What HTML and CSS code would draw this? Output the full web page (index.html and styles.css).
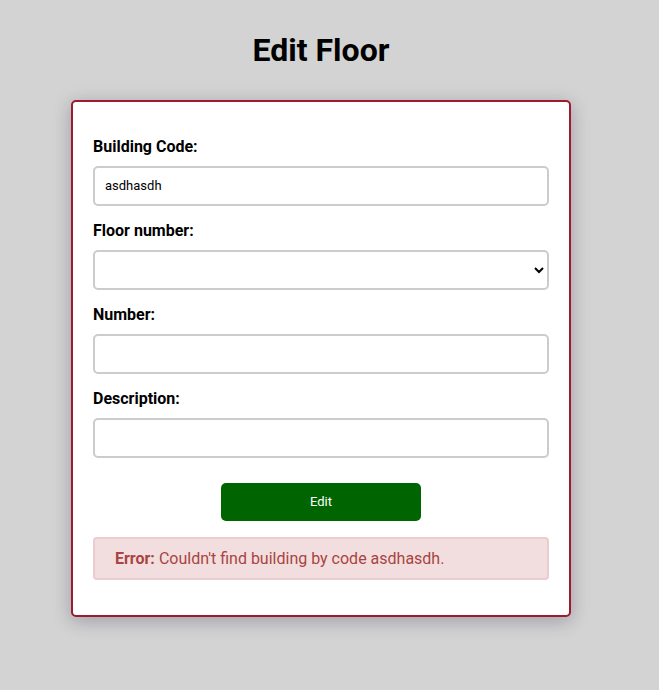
FILE: index.html
```html
<!DOCTYPE html>
<html>
<head>
<meta charset="utf-8">
<link rel="stylesheet" href="styles.css">
</head>
<body>
<div class="page">
  <h1 class="title">Edit Floor</h1>
  <div class="card">
    <form class="form">
      <label class="label">Building Code:</label>
      <input class="field" type="text" value="asdhasdh">
      <label class="label">Floor number:</label>
      <select class="field select"><option></option></select>
      <label class="label">Number:</label>
      <input class="field" type="text">
      <label class="label">Description:</label>
      <input class="field" type="text">
      <div class="actions"><button class="btn" type="button">Edit</button></div>
    </form>
    <div class="error"><strong>Error:</strong> Couldn't find building by code asdhasdh.</div>
  </div>
</div>
</body>
</html>
```
FILE: styles.css
```css
html, body {
  margin: 0;
  padding: 0;
  background: #d3d3d3;
  font-family: Roboto, "Liberation Sans", sans-serif;
}
.page {
  width: 642px;
  display: flex;
  flex-direction: column;
  align-items: center;
  padding-bottom: 60px;
}
.title {
  margin: 32px 0 30px;
  font-size: 32px;
  font-weight: 700;
  color: #000;
  line-height: 37.5px;
}
.card {
  width: 456px;
  background: #fff;
  border: 2px solid #9d1b2b;
  border-radius: 5px;
  padding: 35px 20px 35px;
  box-shadow: 0 4px 18px rgba(20, 20, 60, 0.28);
}
.form {
  display: flex;
  flex-direction: column;
}
.label {
  font-size: 16px;
  font-weight: 700;
  line-height: 19px;
  color: #000;
  margin-bottom: 10px;
}
.field {
  box-sizing: border-box;
  width: 456px;
  height: 40px;
  border: 2px solid #cccccc;
  border-radius: 5px;
  background: #fff;
  padding: 0 10px;
  font-family: Roboto, "Liberation Sans", sans-serif;
  font-size: 13px;
  color: #000;
  margin: 0 0 15px;
}
.select {
  padding: 0 6px;
}
.actions {
  display: flex;
  justify-content: center;
  margin-top: 10px;
}
.btn {
  width: 200px;
  height: 38px;
  border: none;
  border-radius: 5px;
  background: #006400;
  color: #fff;
  font-family: Roboto, "Liberation Sans", sans-serif;
  font-size: 13px;
}
.error {
  margin-top: 16px;
  box-sizing: border-box;
  height: 43px;
  display: flex;
  align-items: center;
  padding: 0 20px;
  background: #f2dede;
  border: 2px solid #ebccd1;
  border-radius: 4px;
  color: #a94442;
  font-size: 16px;
}
.error strong {
  margin-right: 4px;
}
```
